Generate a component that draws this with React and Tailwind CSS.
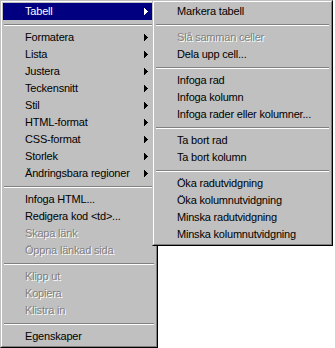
import React from 'react';

const mainItems = [
  { label: 'Tabell', sub: true, active: true },
  'sep',
  { label: 'Formatera', sub: true },
  { label: 'Lista', sub: true },
  { label: 'Justera', sub: true },
  { label: 'Teckensnitt', sub: true },
  { label: 'Stil', sub: true },
  { label: 'HTML-format', sub: true },
  { label: 'CSS-format', sub: true },
  { label: 'Storlek', sub: true },
  { label: 'Ändringsbara regioner', sub: true },
  'sep',
  { label: 'Infoga HTML...' },
  { label: 'Redigera kod <td>...' },
  { label: 'Skapa länk', disabled: true },
  { label: 'Öppna länkad sida', disabled: true },
  'sep',
  { label: 'Klipp ut', disabled: true },
  { label: 'Kopiera', disabled: true },
  { label: 'Klistra in', disabled: true },
  'sep',
  { label: 'Egenskaper' },
];

const tableItems = [
  { label: 'Markera tabell' },
  'sep',
  { label: 'Slå samman celler', disabled: true },
  { label: 'Dela upp cell...' },
  'sep',
  { label: 'Infoga rad' },
  { label: 'Infoga kolumn' },
  { label: 'Infoga rader eller kolumner...' },
  'sep',
  { label: 'Ta bort rad' },
  { label: 'Ta bort kolumn' },
  'sep',
  { label: 'Öka radutvidgning' },
  { label: 'Öka kolumnutvidgning' },
  { label: 'Minska radutvidgning' },
  { label: 'Minska kolumnutvidgning' },
];

function Arrow({ white }) {
  return (
    <svg width="4" height="7" viewBox="0 0 4 7" shapeRendering="crispEdges" className="mr-[7px] shrink-0">
      <polygon points="0,0 4,3.5 0,7" fill={white ? '#ffffff' : '#000000'} />
    </svg>
  );
}

function Menu({ items, width }) {
  return (
    <div
      className="border border-t-[#c0c0c0] border-l-[#c0c0c0] border-r-black border-b-black bg-[#c0c0c0]"
      style={{ width }}
    >
      <div className="border border-t-white border-l-white border-r-[#808080] border-b-[#808080] p-px">
        {items.map((item, i) => {
          if (item === 'sep') {
            return (
              <div key={i} className="h-[9px] pt-1 px-px">
                <div className="h-px bg-[#808080]" />
                <div className="h-px bg-white" />
              </div>
            );
          }
          return (
            <div
              key={i}
              className={
                'h-[17px] flex items-center justify-between pl-[22px] leading-none whitespace-nowrap ' +
                (item.active ? 'bg-[#000080] text-white' : item.disabled ? 'text-[#808080] [text-shadow:1px_1px_0_#ffffff]' : 'text-black')
              }
            >
              <span>{item.label}</span>
              {item.sub && <Arrow white={item.active} />}
            </div>
          );
        })}
      </div>
    </div>
  );
}

export default function App() {
  return (
    <div className="relative w-[335px] h-[348px] bg-white overflow-hidden text-[11px] tracking-[-0.2px] font-['Liberation_Sans',Arial,sans-serif]">
      <Menu items={mainItems} width={158} />
      <div className="absolute left-[152px] top-0 z-10">
        <Menu items={tableItems} width={181} />
      </div>
    </div>
  );
}
